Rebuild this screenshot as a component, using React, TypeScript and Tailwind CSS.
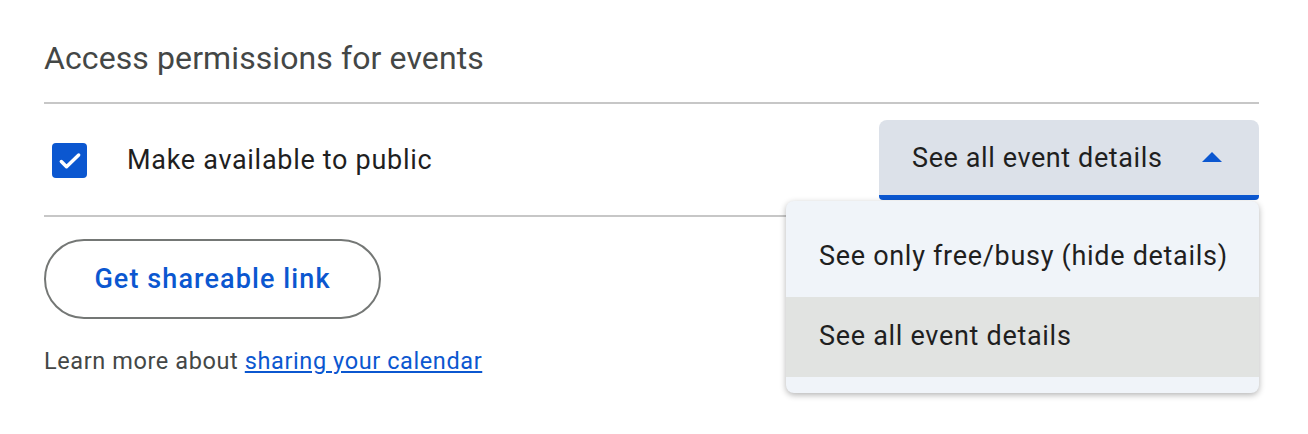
import React, { useState } from "react";

const options = ["See only free/busy (hide details)", "See all event details"];

export default function App() {
  const [checked, setChecked] = useState(true);
  const [selected, setSelected] = useState(1);
  const [open, setOpen] = useState(true);

  return (
    <div
      className="w-[1308px] h-[434px] bg-white pl-[44px] pr-[49px] pt-[36px] text-[#1f1f1f]"
      style={{ fontFamily: "Roboto, 'Noto Sans', sans-serif" }}
    >
      {/* Title */}
      <h2 className="text-[32px] leading-[44px] tracking-[0.1px] text-[#444746] pb-[22px] border-b-2 border-[#c7c7c7]">
        Access permissions for events
      </h2>

      {/* Public row */}
      <div className="flex items-center justify-between h-[113px] border-b-2 border-[#c7c7c7]">
        <label className="flex items-center cursor-pointer pt-[2px]">
          <button
            onClick={() => setChecked((c) => !c)}
            className={`ml-[8px] w-[35px] h-[35px] rounded-[4px] flex items-center justify-center ${
              checked ? "bg-[#0b57d0]" : "border-2 border-[#444746] bg-white"
            }`}
          >
            {checked && (
              <svg width="26" height="26" viewBox="0 0 24 24">
                <path
                  d="M4 12.5l4.8 4.8L20 6.5"
                  fill="none"
                  stroke="white"
                  strokeWidth="3.2"
                  strokeLinecap="round"
                  strokeLinejoin="round"
                />
              </svg>
            )}
          </button>
          <span className="ml-[40px] text-[27px] tracking-[0.7px]">Make available to public</span>
        </label>

        <div className="relative">
          <button
            onClick={() => setOpen((o) => !o)}
            className="w-[380px] h-[80px] bg-[#dce1e9] rounded-t-[8px] rounded-b-[4px] border-b-[5px] border-[#0b57d0] flex items-center justify-between pl-[33px] pr-[37px]"
          >
            <span className="text-[27px] tracking-[0.6px] pt-[3px]">{options[selected]}</span>
            <svg width="20" height="10" viewBox="0 0 20 10">
              <path d="M0 10L10 0l10 10z" fill="#0b57d0" />
            </svg>
          </button>

          {open && (
            <div className="absolute right-0 top-full mt-[1px] w-[473px] bg-[#f0f4f9] rounded-[8px] py-[16px] shadow-[0_2px_6px_rgba(0,0,0,0.3)] z-10">
              {options.map((opt, i) => (
                <div
                  key={opt}
                  onClick={() => {
                    setSelected(i);
                    setOpen(false);
                  }}
                  className={`h-[80px] flex items-center pl-[33px] text-[27px] tracking-[0.7px] cursor-pointer ${
                    i === selected ? "bg-[#e1e3e1]" : ""
                  }`}
                >
                  {opt}
                </div>
              ))}
            </div>
          )}
        </div>
      </div>

      {/* Shareable link */}
      <button className="mt-[22px] w-[337px] h-[80px] rounded-full border-2 border-[#747775] text-[#0b57d0] text-[27px] tracking-[1.1px] font-medium">
        Get shareable link
      </button>

      <p className="mt-[25px] text-[23.5px] tracking-[0.6px] text-[#444746]">
        Learn more about{" "}
        <a href="#" className="text-[#0b57d0] underline">
          sharing your calendar
        </a>
      </p>
    </div>
  );
}
